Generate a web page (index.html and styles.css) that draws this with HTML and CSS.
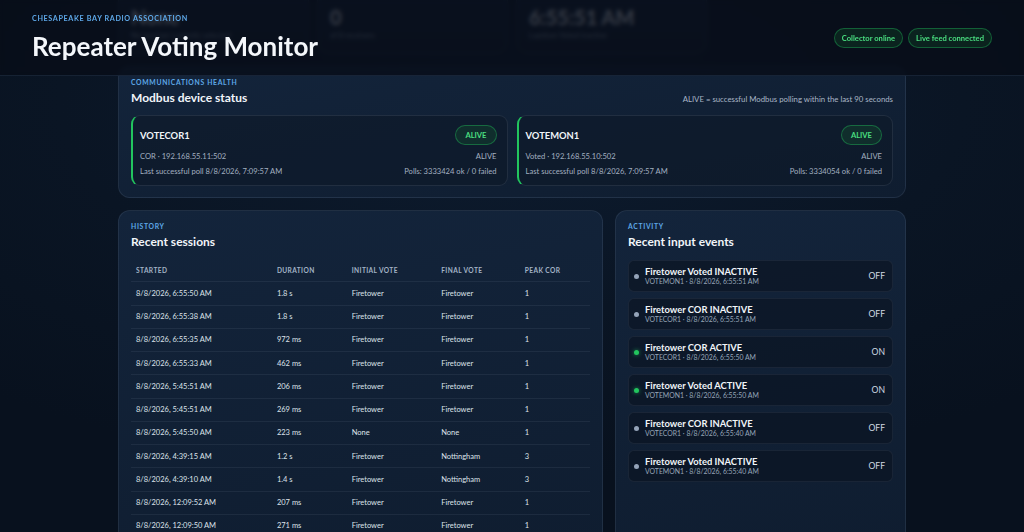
FILE: index.html
```html
<!DOCTYPE html>
<html lang="en">
<head>
<meta charset="utf-8">
<title>Repeater Voting Monitor</title>
<link rel="stylesheet" href="styles.css">
</head>
<body>
<div class="app">
  <header class="topbar">
    <div class="brand">
      <div class="brand-org">Chesapeake Bay Radio Association</div>
      <h1 class="brand-title">Repeater Voting Monitor</h1>
    </div>
    <div class="status-pills">
      <span class="pill">Collector online</span>
      <span class="pill">Live feed connected</span>
    </div>
  </header>

  <div class="scroller" id="scroller">
    <main class="content">
      <section class="stats">
        <div class="stat-card">
          <div class="stat-label">Voted receiver</div>
          <div class="stat-value">None</div>
          <div class="stat-sub">No receiver currently selected</div>
        </div>
        <div class="stat-card">
          <div class="stat-label">Active COR</div>
          <div class="stat-value">0</div>
          <div class="stat-sub">of 8 receivers</div>
        </div>
        <div class="stat-card">
          <div class="stat-label">Last event</div>
          <div class="stat-value">6:55:51 AM</div>
          <div class="stat-sub">Lapidum Voted inactive</div>
        </div>
      </section>

      <section class="panel">
        <div class="panel-head">
          <div>
            <div class="eyebrow">Communications health</div>
            <h2 class="panel-title">Modbus device status</h2>
          </div>
          <div class="panel-note">ALIVE = successful Modbus polling within the last 90 seconds</div>
        </div>
        <div class="devices">
          <div class="device">
            <div class="device-top">
              <span class="device-name">VOTECOR1</span>
              <span class="badge">ALIVE</span>
            </div>
            <div class="device-row first"><span>COR · 192.168.55.11:502</span><span>ALIVE</span></div>
            <div class="device-row"><span>Last successful poll 8/8/2026, 7:09:57 AM</span><span>Polls: 3333424 ok / 0 failed</span></div>
          </div>
          <div class="device">
            <div class="device-top">
              <span class="device-name">VOTEMON1</span>
              <span class="badge">ALIVE</span>
            </div>
            <div class="device-row first"><span>Voted · 192.168.55.10:502</span><span>ALIVE</span></div>
            <div class="device-row"><span>Last successful poll 8/8/2026, 7:09:57 AM</span><span>Polls: 3334054 ok / 0 failed</span></div>
          </div>
        </div>
      </section>

      <div class="lower">
        <section class="panel">
          <div class="eyebrow">History</div>
          <h2 class="panel-title">Recent sessions</h2>
          <table class="sessions">
            <colgroup>
              <col class="c-start"><col class="c-dur"><col class="c-init"><col class="c-final"><col class="c-peak">
            </colgroup>
            <thead>
              <tr><th>Started</th><th>Duration</th><th>Initial vote</th><th>Final vote</th><th>Peak COR</th></tr>
            </thead>
            <tbody>
              <tr><td>8/8/2026, 6:55:50 AM</td><td>1.8 s</td><td>Firetower</td><td>Firetower</td><td>1</td></tr>
              <tr><td>8/8/2026, 6:55:38 AM</td><td>1.8 s</td><td>Firetower</td><td>Firetower</td><td>1</td></tr>
              <tr><td>8/8/2026, 6:55:35 AM</td><td>972 ms</td><td>Firetower</td><td>Firetower</td><td>1</td></tr>
              <tr><td>8/8/2026, 6:55:33 AM</td><td>462 ms</td><td>Firetower</td><td>Firetower</td><td>1</td></tr>
              <tr><td>8/8/2026, 5:45:51 AM</td><td>206 ms</td><td>Firetower</td><td>Firetower</td><td>1</td></tr>
              <tr><td>8/8/2026, 5:45:51 AM</td><td>269 ms</td><td>Firetower</td><td>Firetower</td><td>1</td></tr>
              <tr><td>8/8/2026, 5:45:50 AM</td><td>223 ms</td><td>None</td><td>None</td><td>1</td></tr>
              <tr><td>8/8/2026, 4:39:15 AM</td><td>1.2 s</td><td>Firetower</td><td>Nottingham</td><td>3</td></tr>
              <tr><td>8/8/2026, 4:39:10 AM</td><td>1.4 s</td><td>Firetower</td><td>Nottingham</td><td>3</td></tr>
              <tr><td>8/8/2026, 12:09:52 AM</td><td>207 ms</td><td>Firetower</td><td>Firetower</td><td>1</td></tr>
              <tr><td>8/8/2026, 12:09:50 AM</td><td>271 ms</td><td>Firetower</td><td>Firetower</td><td>1</td></tr>
            </tbody>
          </table>
        </section>

        <section class="panel">
          <div class="eyebrow">Activity</div>
          <h2 class="panel-title">Recent input events</h2>
          <ul class="events">
            <li class="event"><span class="dot"></span><div class="event-text"><div class="event-title">Firetower Voted INACTIVE</div><div class="event-sub">VOTEMON1 · 8/8/2026, 6:55:51 AM</div></div><span class="event-state">OFF</span></li>
            <li class="event"><span class="dot"></span><div class="event-text"><div class="event-title">Firetower COR INACTIVE</div><div class="event-sub">VOTECOR1 · 8/8/2026, 6:55:51 AM</div></div><span class="event-state">OFF</span></li>
            <li class="event"><span class="dot on"></span><div class="event-text"><div class="event-title">Firetower COR ACTIVE</div><div class="event-sub">VOTECOR1 · 8/8/2026, 6:55:50 AM</div></div><span class="event-state">ON</span></li>
            <li class="event"><span class="dot on"></span><div class="event-text"><div class="event-title">Firetower Voted ACTIVE</div><div class="event-sub">VOTEMON1 · 8/8/2026, 6:55:50 AM</div></div><span class="event-state">ON</span></li>
            <li class="event"><span class="dot"></span><div class="event-text"><div class="event-title">Firetower COR INACTIVE</div><div class="event-sub">VOTECOR1 · 8/8/2026, 6:55:40 AM</div></div><span class="event-state">OFF</span></li>
            <li class="event"><span class="dot"></span><div class="event-text"><div class="event-title">Firetower Voted INACTIVE</div><div class="event-sub">VOTEMON1 · 8/8/2026, 6:55:40 AM</div></div><span class="event-state">OFF</span></li>
          </ul>
        </section>
      </div>
    </main>
  </div>
</div>
<script src="script.js"></script>
</body>
</html>
```

FILE: styles.css
```css
* { box-sizing: border-box; }

html, body { margin: 0; padding: 0; height: 100%; overflow: hidden; }

body {
  font-family: Lato, "Noto Sans", "Liberation Sans", sans-serif;
  color: #e2e8f0;
  background: radial-gradient(ellipse 80% 70% at 50% 20%, #0d1c30 0%, #0a1524 55%, #08111e 100%);
}

.app {
  position: relative;
  height: 100vh;
}

/* ---------- header (overlay above the scrolled content) ---------- */
.topbar {
  position: absolute;
  top: 0;
  left: 0;
  right: 0;
  z-index: 10;
  height: 76px;
  display: flex;
  justify-content: space-between;
  align-items: center;
  padding: 0 32px;
  background: rgba(7, 13, 24, 0.8);
  backdrop-filter: blur(2px);
  border-bottom: 1px solid rgba(96, 130, 170, 0.18);
}

.brand { align-self: flex-start; padding-top: 14px; }

.brand-org {
  font-size: 7.2px;
  line-height: 10px;
  font-weight: 700;
  letter-spacing: 0.09em;
  text-transform: uppercase;
  color: #5ea8e8;
}

.brand-title {
  margin: 6px 0 0;
  font-size: 26px;
  line-height: 32px;
  font-weight: 700;
  color: #f4f7fb;
}

.status-pills { display: flex; gap: 5px; }

.pill {
  height: 20px;
  display: inline-flex;
  align-items: center;
  padding: 0 7px;
  border-radius: 10px;
  border: 1px solid rgba(34, 197, 94, 0.38);
  background: rgba(20, 83, 45, 0.32);
  color: #4ade80;
  font-size: 7.6px;
  font-weight: 700;
}

/* ---------- scroll area ---------- */
.scroller {
  height: 100%;
  overflow-y: auto;
  scrollbar-width: none;
}

.scroller::-webkit-scrollbar { display: none; }

.content {
  max-width: 788px;
  margin: 0 auto;
  padding: 92px 0 24px;
  display: flex;
  flex-direction: column;
  gap: 12px;
}

.stats {
  display: grid;
  grid-template-columns: repeat(4, 1fr);
  gap: 8px;
}

.stat-card {
  height: 69px;
  padding: 0 12px;
  border-radius: 12px;
  border: 1px solid rgba(148, 163, 184, 0.14);
  background: linear-gradient(180deg, #13243a, #0f1c2e);
}

.stat-label {
  margin-top: 4px;
  font-size: 7px;
  line-height: 10px;
  font-weight: 700;
  text-transform: uppercase;
  letter-spacing: 0.08em;
  color: #7f93aa;
}

.stat-value {
  margin-top: 6px;
  font-size: 20px;
  line-height: 22px;
  font-weight: 700;
  color: #e8edf4;
}

.stat-sub {
  margin-top: 2px;
  font-size: 7.6px;
  line-height: 11px;
  color: #9aa9bb;
}

.panel {
  background: linear-gradient(170deg, #13243b 0%, #0f1d30 100%);
  border: 1px solid rgba(148, 163, 184, 0.13);
  border-radius: 12px;
  padding: 11px 12px;
}

.panel-head {
  display: flex;
  justify-content: space-between;
  align-items: flex-end;
  margin-bottom: 10px;
}

.eyebrow {
  font-size: 6.8px;
  line-height: 8px;
  font-weight: 700;
  letter-spacing: 0.1em;
  text-transform: uppercase;
  color: #5ea8e8;
}

.panel-title {
  margin: 5px 0 0;
  font-size: 12px;
  line-height: 14px;
  font-weight: 700;
  color: #f1f5f9;
}

.panel-note {
  font-size: 7.8px;
  line-height: 11px;
  color: #a9b6c6;
}

/* ---------- devices ---------- */
.devices {
  display: grid;
  grid-template-columns: 1fr 1fr;
  gap: 9px;
}

.device {
  height: 71px;
  padding: 9px 10px 8px 7px;
  border-radius: 9px;
  border: 1px solid rgba(148, 163, 184, 0.14);
  border-left: 2px solid #22c55e;
  background: rgba(12, 23, 38, 0.55);
}

.device-top {
  display: flex;
  justify-content: space-between;
  align-items: center;
  height: 20px;
}

.device-name {
  font-size: 9.4px;
  font-weight: 700;
  color: #f1f5f9;
}

.badge {
  height: 20px;
  display: inline-flex;
  align-items: center;
  padding: 0 9px;
  border-radius: 10px;
  border: 1px solid rgba(34, 197, 94, 0.4);
  background: rgba(20, 83, 45, 0.35);
  color: #4ade80;
  font-size: 7.6px;
  font-weight: 700;
}

.device-row {
  display: flex;
  justify-content: space-between;
  font-size: 7.6px;
  line-height: 11px;
  color: #a3b0c0;
  margin-top: 4px;
}

.device-row.first { margin-top: 6px; }

/* ---------- lower ---------- */
.lower {
  display: grid;
  grid-template-columns: 5fr 3fr;
  gap: 12px;
}

.sessions {
  width: 100%;
  margin-top: 10px;
  border-collapse: collapse;
  table-layout: fixed;
}

.c-start { width: 30.7%; }
.c-dur { width: 16.3%; }
.c-init { width: 19.5%; }
.c-final { width: 18.2%; }
.c-peak { width: 15.3%; }

.sessions th,
.sessions td {
  text-align: left;
  padding: 5.5px 5px;
  line-height: 11.25px;
  border-bottom: 1px solid rgba(148, 163, 184, 0.1);
  white-space: nowrap;
}

.sessions th {
  font-size: 6.6px;
  font-weight: 700;
  letter-spacing: 0.06em;
  text-transform: uppercase;
  color: #a3b3c6;
}

.sessions td {
  font-size: 7.5px;
  color: #dde3ea;
}

.events {
  list-style: none;
  margin: 11px 0 0;
  padding: 0;
  display: flex;
  flex-direction: column;
  gap: 6px;
}

.event {
  display: flex;
  align-items: center;
  height: 32px;
  padding: 0 7px 0 5px;
  border-radius: 6px;
  border: 1px solid rgba(148, 163, 184, 0.1);
  background: rgba(10, 19, 32, 0.6);
}

.dot {
  width: 5px;
  height: 5px;
  border-radius: 50%;
  background: #94a3b8;
  flex: none;
}

.dot.on {
  background: #22c55e;
  box-shadow: 0 0 4px rgba(34, 197, 94, 0.7);
}

.event-text { flex: 1; margin-left: 6px; }

.event-title {
  font-size: 9.4px;
  line-height: 11px;
  font-weight: 700;
  color: #f1f5f9;
}

.event-sub {
  font-size: 6.9px;
  line-height: 9px;
  color: #97a6b8;
}

.event-state {
  font-size: 8.6px;
  color: #d0d8e2;
}
```

FILE: script.js
```js
document.getElementById('scroller').scrollTop = 107;
```
